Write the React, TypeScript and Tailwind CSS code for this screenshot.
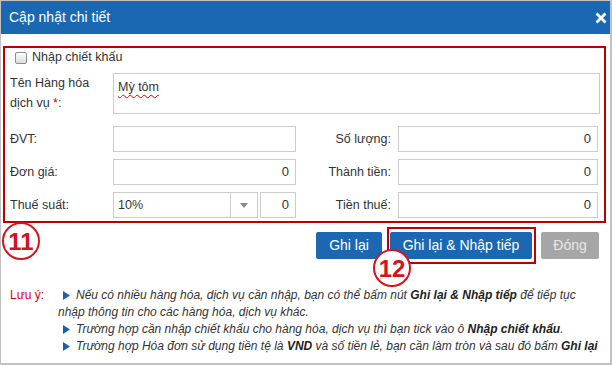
function Bullet() {
  return (
    <svg width="7" height="9" viewBox="0 0 7 9" className="mr-[6px] ml-[5px] inline-block align-[-1px]">
      <polygon points="0,0 7,4.5 0,9" fill="#1f5fa8" />
    </svg>
  );
}

function Marker({ label, className }: { label: string; className: string }) {
  return (
    <div
      className={`absolute flex h-[38px] w-[38px] items-center justify-center rounded-full border-2 border-[#d5131c] bg-white pt-[1px] text-[24px] font-bold text-[#d5131c] ${className}`}
    >
      {label}
    </div>
  );
}

function NumInput({ value = '0', className = '' }: { value?: string; className?: string }) {
  return (
    <div
      className={`flex h-[26px] items-center justify-end border border-[#cccccc] bg-white pr-[6px] text-[13px] text-[#333] ${className}`}
    >
      {value}
    </div>
  );
}

export default function App() {
  return (
    <div className="relative h-[366px] w-[612px] overflow-hidden bg-white font-['Liberation_Sans',Arial,sans-serif] text-[12.5px] text-[#333]">
      <div className="h-[365px] border border-r-2 border-b-2 border-[#c2c2c2]">
        {/* header */}
        <div className="flex h-[33px] items-center justify-between bg-[#1b68b2] pr-[3px] pl-[8px]">
          <span className="text-[14px] text-white">Cập nhật chi tiết</span>
          <svg width="12" height="12" viewBox="0 0 12 12">
            <path d="M1.5 1.5 L10.5 10.5 M10.5 1.5 L1.5 10.5" stroke="white" strokeWidth="2.8" />
          </svg>
        </div>

        <div className="px-[2px] pt-[12px]">
          {/* form */}
          <div className="w-[603px] border-2 border-[#c00000] pb-[3px]">
            <div className="mt-[3px] flex h-[13px] items-center pl-[10px]">
              <span className="h-[12px] w-[12px] rounded-[2px] border border-[#8e8e8e] bg-gradient-to-b from-white to-[#dcdcdc]" />
              <span className="ml-[5px]">Nhập chiết khấu</span>
            </div>

            <div className="mt-[9px] flex">
              <div className="w-[108px] pl-[5px] leading-[20px]">
                Tên Hàng hóa
                <br />
                dịch vụ <span className="text-[#e00000]">*</span>:
              </div>
              <div className="h-[41px] w-[487px] border border-[#cccccc] px-[4px] pt-[4px]">
                <span className="underline decoration-[#e00000] decoration-wavy decoration-1 underline-offset-[3px]">
                  Mỳ tôm
                </span>
              </div>
            </div>

            <div className="mt-[12px] flex h-[26px] items-center">
              <div className="w-[108px] pl-[5px]">ĐVT:</div>
              <NumInput value="" className="w-[183px]" />
              <div className="w-[95px] text-right">Số lượng:</div>
              <NumInput className="ml-[7px] w-[200px]" />
            </div>

            <div className="mt-[7px] flex h-[26px] items-center">
              <div className="w-[108px] pl-[5px]">Đơn giá:</div>
              <NumInput className="w-[183px]" />
              <div className="w-[95px] text-right">Thành tiền:</div>
              <NumInput className="ml-[7px] w-[200px]" />
            </div>

            <div className="mt-[7px] flex h-[26px] items-center">
              <div className="w-[108px] pl-[5px]">Thuế suất:</div>
              <div className="flex h-[26px] w-[145px] border border-[#cccccc]">
                <div className="flex flex-1 items-center pl-[4px]">10%</div>
                <div className="flex w-[27px] items-center justify-center border-l border-[#cccccc]">
                  <svg width="8" height="5" viewBox="0 0 8 5">
                    <polygon points="0,0 8,0 4,5" fill="#8a8a8a" />
                  </svg>
                </div>
              </div>
              <NumInput className="ml-[2px] w-[36px]" />
              <div className="w-[95px] text-right">Tiền thuế:</div>
              <NumInput className="ml-[7px] w-[200px]" />
            </div>
          </div>

          {/* buttons */}
          <div className="mt-[4px] flex items-center justify-end gap-[5px] pr-[9px] text-[14px] text-white">
            <div className="flex h-[27px] w-[66px] items-center justify-center rounded-[2px] bg-[#1c67b1]">Ghi lại</div>
            <div className="border-2 border-[#c00000] py-[3px] pr-[2px] pl-[1px]">
              <div className="flex h-[27px] w-[142px] items-center justify-center rounded-[2px] bg-[#1c67b1]">
                Ghi lại &amp; Nhập tiếp
              </div>
            </div>
            <div className="flex h-[27px] w-[58px] items-center justify-center rounded-[2px] bg-[#a6a6a6] text-[#e6e6e6]">
              Đóng
            </div>
          </div>

          {/* notes */}
          <div className="mt-[23px] flex text-[12px] leading-[17px]">
            <div className="w-[55px] shrink-0 pl-[7px] text-[#e00000]">Lưu ý:</div>
            <div className="italic">
              <div className="whitespace-nowrap">
                <Bullet />
                Nếu có nhiều hàng hóa, dịch vụ cần nhập, bạn có thể bấm nút{' '}
                <b className="text-[#222]">Ghi lại &amp; Nhập tiếp</b> để tiếp tục
                <br />
                nhập thông tin cho các hàng hóa, dịch vụ khác.
              </div>
              <div className="whitespace-nowrap">
                <Bullet />
                Trường hợp cần nhập chiết khấu cho hàng hóa, dịch vụ thì bạn tick vào ô{' '}
                <b className="text-[#222]">Nhập chiết khấu</b>.
              </div>
              <div className="whitespace-nowrap">
                <Bullet />
                Trường hợp Hóa đơn sử dụng tiền tệ là <b className="text-[#222]">VND</b> và số tiền lẻ, bạn cần làm
                tròn và sau đó bấm <b className="text-[#222]">Ghi lại</b>
              </div>
            </div>
          </div>
        </div>
      </div>

      <Marker label="11" className="top-[222px] left-[2px]" />
      <Marker label="12" className="top-[249px] left-[373px]" />
    </div>
  );
}
